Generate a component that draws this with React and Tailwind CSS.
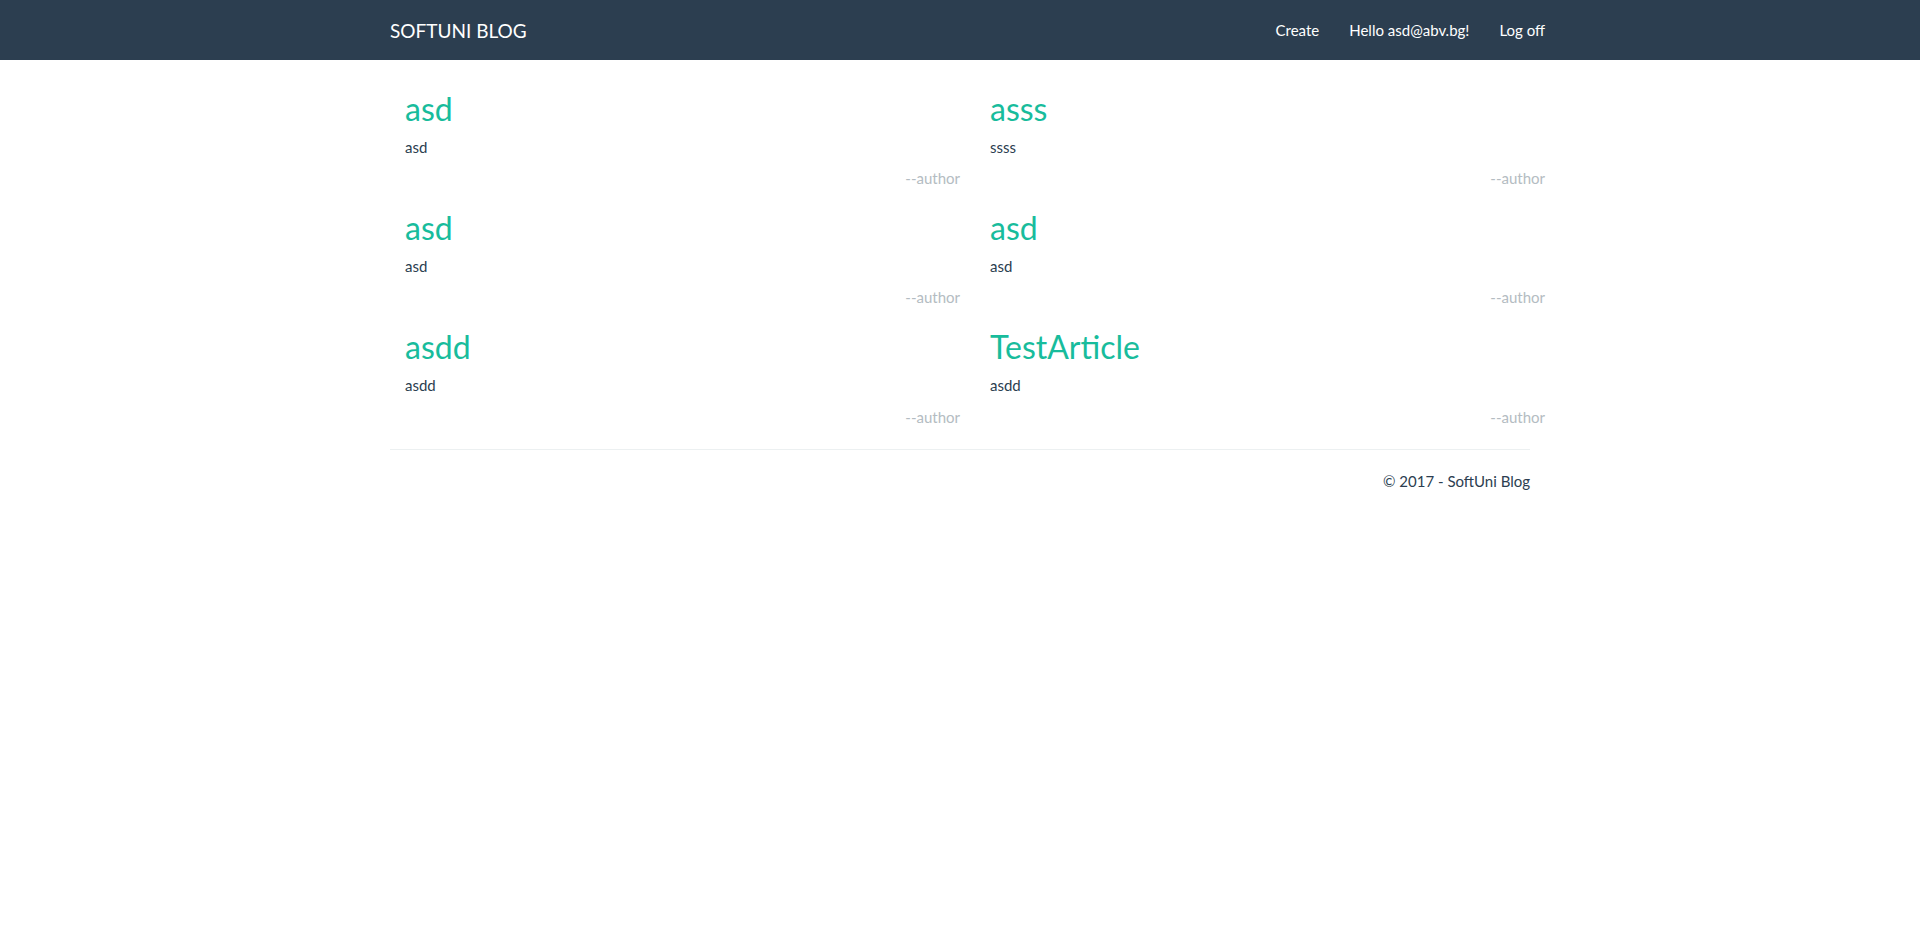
export default function App() {
  const articles = [
    { title: "asd", body: "asd" },
    { title: "asss", body: "ssss" },
    { title: "asd", body: "asd" },
    { title: "asd", body: "asd" },
    { title: "asdd", body: "asdd" },
    { title: "TestArticle", body: "asdd" },
  ];
  return (
    <div className="min-h-screen bg-white font-['Lato',sans-serif] text-[15px] leading-[21px] text-[#2c3e50]">
      <nav className="h-[60px] w-full bg-[#2c3e50]">
        <div className="mx-auto flex h-full w-[1140px] items-center justify-between">
          <a className="text-[19px] leading-[21px] text-white" href="#">SOFTUNI BLOG</a>
          <ul className="-mr-[15px] flex items-center gap-[30px] text-[15px] leading-[21px] text-white">
            <li><a href="#">Create</a></li>
            <li><a href="#">Hello asd@abv.bg!</a></li>
            <li><a href="#">Log off</a></li>
          </ul>
        </div>
      </nav>
      <main className="mx-auto w-[1140px] pt-[10px]">
        <div className="grid w-[1170px] grid-cols-[585px_585px]">
          {articles.map((a, i) => (
            <article key={i} className="px-[15px]">
              <h2 className="mb-[10.5px] mt-[21px] text-[32px] leading-[35.2px] font-normal text-[#18bc9c]">{a.title}</h2>
              <p className="mb-[10.5px]">{a.body}</p>
              <div className="text-right text-[#b4bcc2]">--author</div>
            </article>
          ))}
        </div>
        <hr className="mb-[21px] mt-[21px] border-0 border-t border-[#ecf0f1]" />
        <footer>
          <p className="text-right">© 2017 - SoftUni Blog</p>
        </footer>
      </main>
    </div>
  );
}
